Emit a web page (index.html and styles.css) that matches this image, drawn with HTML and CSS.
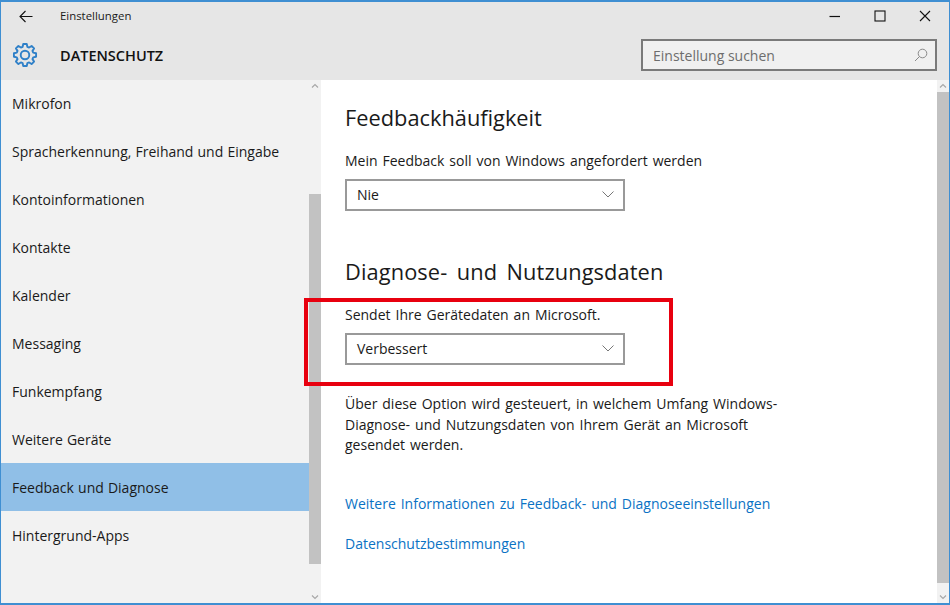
FILE: index.html
```html
<!DOCTYPE html>
<html lang="de">
  <head>
    <meta charset="UTF-8" />
    <title>Einstellungen</title>
    <link rel="stylesheet" href="styles.css">
  </head>
  <body>
    <div class="window">
      <div class="header">
        <div class="titlebar">
          <svg class="back-icon" width="14" height="13" viewBox="0 0 14 13"><path d="M13.500 6.500H1M6.500 1L1 6.500l5.500 5.500" fill="none" stroke="#111" stroke-width="1.100"/></svg>
          <span class="app-name">Einstellungen</span>
          <div class="window-buttons">
            <svg width="12" height="12" viewBox="0 0 12 12"><path d="M0.500 6.500H11" stroke="#111" stroke-width="1.200"/></svg>
            <svg width="12" height="12" viewBox="0 0 12 12"><rect x="1" y="1" width="10" height="10" fill="none" stroke="#111" stroke-width="1.100"/></svg>
            <svg width="12" height="12" viewBox="0 0 12 12"><path d="M1 1l10 10M11 1L1 11" stroke="#111" stroke-width="1.100"/></svg>
          </div>
        </div>
        <div class="pagebar">
          <svg class="gear" width="26" height="26" viewBox="0 0 26 26">
            <g transform="translate(13 13) scale(.95)" fill="none" stroke="#2f80c8" stroke-width="2" stroke-linejoin="round">
              <circle r="4.500"/>
              <path d="M-2.480-8.650L-1.850-11.650 1.850-11.650 2.480-8.650 4.360-7.870 6.940-9.550 9.550-6.940 7.870-4.360 8.650-2.480 11.650-1.850 11.650 1.850 8.650 2.480 7.870 4.360 9.550 6.940 6.940 9.550 4.360 7.870 2.480 8.650 1.850 11.650-1.850 11.650-2.480 8.650-4.360 7.870-6.940 9.550-9.550 6.940-7.870 4.360-8.650 2.480-11.650 1.850-11.650-1.850-8.650-2.480-7.870-4.360-9.550-6.940-6.940-9.550-4.360-7.870z"/>
            </g>
          </svg>
          <span class="page-title">DATENSCHUTZ</span>
          <div class="search">
            <span>Einstellung suchen</span>
            <svg width="14" height="14" viewBox="0 0 14 14"><circle cx="8.500" cy="5.500" r="4.300" fill="none" stroke="#8a8a8a"/><path d="M5.500 8.500L1 13" stroke="#8a8a8a"/></svg>
          </div>
        </div>
      </div>
      <div class="main">
        <div class="sidebar">
          <ul class="nav">
            <li>Mikrofon</li>
            <li>Spracherkennung, Freihand und Eingabe</li>
            <li>Kontoinformationen</li>
            <li>Kontakte</li>
            <li>Kalender</li>
            <li>Messaging</li>
            <li>Funkempfang</li>
            <li>Weitere Geräte</li>
            <li class="selected">Feedback und Diagnose</li>
            <li>Hintergrund-Apps</li>
          </ul>
          <div class="scrollbar side-scroll">
            <svg class="arrow" width="12" height="12" viewBox="0 0 12 12"><path d="M3 7.500l3-3 3 3" fill="none" stroke="#a8a8a8" stroke-width="1.200"/></svg>
            <div class="thumb"></div>
            <svg class="arrow arrow-down" width="12" height="12" viewBox="0 0 12 12"><path d="M3 4.500l3 3 3-3" fill="none" stroke="#a8a8a8" stroke-width="1.200"/></svg>
          </div>
        </div>
        <div class="content">
          <div class="panel">
            <h2>Feedbackhäufigkeit</h2>
            <p class="label">Mein Feedback soll von Windows angefordert werden</p>
            <div class="select">
              <span>Nie</span>
              <svg width="12" height="7" viewBox="0 0 12 7"><path d="M.5.5L6 6 11.500.5" fill="none" stroke="#777"/></svg>
            </div>
            <h2 class="second">Diagnose- und Nutzungsdaten</h2>
            <p class="label">Sendet Ihre Gerätedaten an Microsoft.</p>
            <div class="select">
              <span>Verbessert</span>
              <svg width="12" height="7" viewBox="0 0 12 7"><path d="M.5.5L6 6 11.500.5" fill="none" stroke="#777"/></svg>
            </div>
            <p class="info">Über diese Option wird gesteuert, in welchem Umfang Windows-Diagnose- und Nutzungsdaten von Ihrem Gerät an Microsoft gesendet werden.</p>
            <a class="link first-link">Weitere Informationen zu Feedback- und Diagnoseeinstellungen</a>
            <a class="link">Datenschutzbestimmungen</a>
          </div>
          <div class="scrollbar main-scroll">
            <svg class="arrow" width="12" height="12" viewBox="0 0 12 12"><path d="M3 7.500l3-3 3 3" fill="none" stroke="#a8a8a8" stroke-width="1.200"/></svg>
            <div class="thumb"></div>
            <svg class="arrow arrow-down" width="12" height="12" viewBox="0 0 12 12"><path d="M3 4.500l3 3 3-3" fill="none" stroke="#a8a8a8" stroke-width="1.200"/></svg>
          </div>
        </div>
      </div>
      <div class="highlight"></div>
    </div>
  </body>
</html>
```

FILE: styles.css
```css
html, body {
  margin: 0;
  padding: 0;
}

body {
  font-family: "Open Sans", "Noto Sans", sans-serif;
  font-size: 14px;
  color: #1a1a1a;
}

.window {
  position: relative;
  width: 950px;
  height: 605px;
  box-sizing: border-box;
  border: 1px solid #3f8fd2;
  border-top-width: 2px;
  border-bottom-width: 2px;
  display: flex;
  flex-direction: column;
  overflow: hidden;
}

.header {
  background-color: #e6e6e6;
  height: 78px;
  flex: none;
}

.titlebar {
  display: flex;
  align-items: center;
  height: 28px;
}

.back-icon {
  margin-left: 18px;
}

.app-name {
  margin-left: 27px;
  margin-bottom: 2px;
  font-size: 11.400px;
}

.window-buttons {
  margin-left: auto;
  display: flex;
  gap: 33px;
  margin-right: 18px;
}

.pagebar {
  display: flex;
  align-items: center;
  height: 50px;
}

.gear {
  margin-left: 11px;
}

.page-title {
  margin-left: 22px;
  font-size: 14.500px;
  font-weight: 600;
  color: #111;
}

.search {
  margin-left: auto;
  margin-right: 12px;
  width: 296px;
  height: 32px;
  box-sizing: border-box;
  border: 2px solid #7a7a7a;
  background-color: #f0f0f0;
  display: flex;
  align-items: center;
  justify-content: space-between;
  padding: 0 7px 0 10px;
  color: #6d6d6d;
}

.main {
  flex: 1;
  display: flex;
  min-height: 0;
}

.sidebar {
  width: 320px;
  background-color: #f2f2f2;
  display: flex;
  flex: none;
}

.nav {
  list-style: none;
  margin: 0;
  padding: 0;
  flex: 1;
  word-spacing: 0.500px;
}

.nav li {
  height: 48px;
  line-height: 48px;
  padding-left: 11px;
}

/* box sits 1px higher than the row grid, text stays on it */
.nav li.selected {
  background-color: #90bfe7;
  margin-top: -1px;
  margin-bottom: 1px;
  line-height: 50px;
}

.scrollbar {
  width: 12px;
  flex: none;
  display: flex;
  flex-direction: column;
}

.arrow {
  flex: none;
}

.arrow-down {
  margin-top: auto;
}

.side-scroll .thumb {
  margin-top: 102px;
  height: 370px;
  background-color: #c2c2c2;
}

.content {
  flex: 1;
  display: flex;
  background-color: #fff;
}

.panel {
  flex: 1;
  padding-left: 24px;
  word-spacing: 1.300px;
}

.main-scroll {
  background-color: #f2f2f2;
}

.main-scroll .thumb {
  height: 491px;
  background-color: #c2c2c2;
}

h2 {
  font-size: 21.800px;
  font-weight: 400;
  margin: 23px 0 0;
  line-height: 30px;
  word-spacing: 3.700px;
}

h2.second {
  margin-top: 46px;
  letter-spacing: 0.100px;
}

.label {
  margin: 18px 0 0;
  line-height: 20px;
}

.select {
  width: 280px;
  height: 32px;
  margin-top: 8px;
  box-sizing: border-box;
  border: 2px solid #999;
  display: flex;
  align-items: center;
  justify-content: space-between;
  padding: 0 9px 2px 10px;
}

.info {
  width: 450px;
  margin: 29px 0 0;
  line-height: 20.500px;
}

.link {
  display: block;
  color: #0a72c4;
  line-height: 20px;
  margin-top: 20px;
}

.first-link {
  margin-top: 38px;
}

.highlight {
  position: absolute;
  left: 303px;
  top: 296px;
  width: 369px;
  height: 88px;
  box-sizing: border-box;
  border: 4px solid #e8000f;
}
```
